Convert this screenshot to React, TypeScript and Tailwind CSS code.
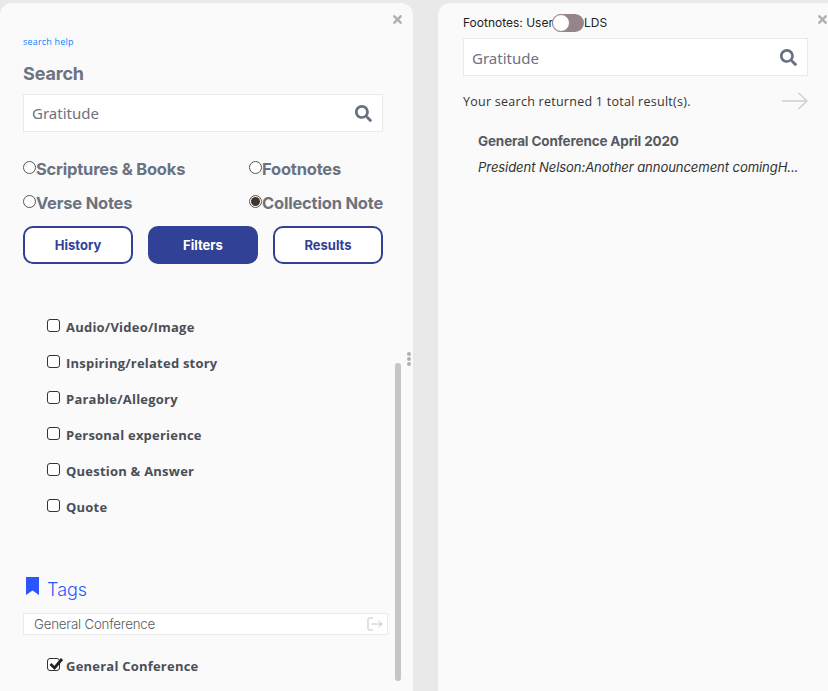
import React from "react";
import { FaSearch, FaTimes } from "react-icons/fa";

const filters = [
  "Audio/Video/Image",
  "Inspiring/related story",
  "Parable/Allegory",
  "Personal experience",
  "Question & Answer",
  "Quote",
];

const Radio = ({ label, checked }: { label: string; checked?: boolean }) => (
  <div className="flex items-center h-6 whitespace-nowrap text-[16.5px] font-bold text-[#6c7280] font-['Inter',sans-serif] tracking-[-0.2px]">
    <span className="w-[13px] h-[13px] mb-[3px] rounded-full border border-[#555] bg-white flex items-center justify-center shrink-0">
      {checked && <span className="w-[9px] h-[9px] rounded-full bg-[#43332f]" />}
    </span>
    <span>{label}</span>
  </div>
);

const SearchBox = ({ textClass }: { textClass: string }) => (
  <div className="h-[38px] bg-white border border-[#eaeaea] flex items-center justify-between pl-2 pr-[10px]">
    <span className={`${textClass} text-[15px] text-[#6c7280] font-['Noto_Sans',sans-serif]`}>Gratitude</span>
    <FaSearch className="text-[#667080] text-[17px]" />
  </div>
);

const Check = ({ label, checked }: { label: string; checked?: boolean }) => (
  <div className="flex items-center h-9 pt-[2px] pl-6 gap-[6px]">
    <span className="relative w-[13px] h-[13px] mb-[6px] rounded-[3px] border border-[#333] bg-white shrink-0">
      {checked && (
        <svg viewBox="0 0 16 16" className="absolute -top-[3px] left-0 w-[16px] h-[16px]">
          <path d="M2.5 8 L6.5 12 L14 3" fill="none" stroke="#222" strokeWidth="2.8" />
        </svg>
      )}
    </span>
    <span className="text-[13px] font-bold text-[#4a4f57] font-['Open_Sans',sans-serif] tracking-[0.22px]">{label}</span>
  </div>
);

const TabButton = ({ label, active }: { label: string; active?: boolean }) => (
  <button
    type="button"
    className={`w-[110px] h-[38px] pt-[2px] rounded-[10px] border-2 border-[#314196] text-[13px] font-bold font-['Inter',sans-serif] ${
      active ? "bg-[#314196] text-white" : "bg-white text-[#314196]"
    }`}
  >
    {label}
  </button>
);

export default function App() {
  return (
    <div className="w-[828px] h-[691px] overflow-hidden bg-[#e9e9e9] pt-[3px] flex relative">
      {/* LEFT PANEL */}
      <div className="relative w-[413px] h-[688px] shrink-0 bg-[#fafafa] rounded-t-[12px] pl-[23px]">
        <FaTimes className="absolute top-[10px] right-[9px] text-[#b0b0b4] text-[13px]" />
        <a className="block mt-[33px] h-3 leading-3 text-[9px] text-[#0a84ff] font-['Open_Sans',sans-serif] tracking-[0.2px]">search help</a>
        <h2 className="mt-[14px] h-6 leading-6 text-[18px] font-bold text-[#6c7280] font-['Inter',sans-serif] tracking-[-0.15px]">Search</h2>
        <div className="w-[360px] mt-[8px]">
          <SearchBox textClass="pt-0" />
          <div className="mt-[25px] flex justify-between">
            <Radio label="Scriptures & Books" />
            <div className="w-[134px]"><Radio label="Footnotes" /></div>
          </div>
          <div className="mt-[10px] flex justify-between">
            <Radio label="Verse Notes" />
            <div className="w-[134px]"><Radio label="Collection Note" checked /></div>
          </div>
          <div className="mt-[11px] flex justify-between">
            <TabButton label="History" />
            <TabButton label="Filters" active />
            <TabButton label="Results" />
          </div>
        </div>

        <div className="mt-[45px]">
          {filters.map((f) => (
            <Check key={f} label={f} />
          ))}
        </div>

        <div className="mt-[50px] h-7 flex items-center pl-[3px] gap-2 text-[#2a55ff]">
          <svg viewBox="0 0 13 18" className="w-[13px] h-[18px] mb-[7px]" fill="#2a55ff">
            <path d="M0 0 H13 V18 L6.5 13.5 L0 18 Z" />
          </svg>
          <span className="text-[18px] font-['Inter',sans-serif] font-light">Tags</span>
        </div>
        <div className="mt-[10px] w-[365px] h-[22px] bg-white border border-[#eaeaea] flex items-center justify-between pl-[10px] pr-[4px]">
          <span className="pt-[2px] text-[13.3px] font-light text-[#555b63] font-['Inter',sans-serif] tracking-[-0.2px]">General Conference</span>
          <svg viewBox="0 0 16 14" className="w-4 h-[14px]" fill="none" stroke="#c4c4c4" strokeWidth="1">
            <path d="M6 1 H2 Q1 1 1 2 V12 Q1 13 2 13 H6" />
            <path d="M4.5 7 H15 M11.5 3.8 L15 7 L11.5 10.2" />
          </svg>
        </div>
        <div className="mt-[13px]">
          <Check label="General Conference" checked />
        </div>

        {/* scrollbar + drag handle */}
        <div className="absolute left-[395px] top-[360px] w-[6px] h-[318px] rounded-full bg-[#c6c6c6]" />
        <div className="absolute left-[407px] top-[349px] flex flex-col gap-[1.5px]">
          <span className="w-[3.5px] h-[3.5px] rounded-full bg-[#b0b0b0]" />
          <span className="w-[3.5px] h-[3.5px] rounded-full bg-[#b0b0b0]" />
          <span className="w-[3.5px] h-[3.5px] rounded-full bg-[#b0b0b0]" />
        </div>
      </div>

      {/* RIGHT PANEL */}
      <div className="relative ml-[25px] flex-1 h-[688px] bg-[#fafafa] rounded-tl-[12px] pl-[25px]">
        <FaTimes className="absolute top-[10px] -right-[1px] text-[#b0b0b4] text-[13px]" />
        <div className="h-[20px] mt-[10px] flex items-center text-[12px] text-[#222] font-['Inter',sans-serif]">
          <span>Footnotes: User</span>
          <span className="w-8 h-[18px] rounded-full bg-[#94848c] flex items-center -ml-px">
            <span className="w-[18px] h-[18px] rounded-full bg-white border border-[#94848c]" />
          </span>
          <span>LDS</span>
        </div>
        <div className="w-[345px] mt-[5px]">
          <SearchBox textClass="pt-[2px]" />
        </div>
        <div className="w-[345px] mt-[13px] h-6 flex items-center justify-between">
          <span className="pt-[3px] text-[12.5px] text-[#333] font-['Open_Sans',sans-serif] tracking-[0.26px]">Your search returned 1 total result(s).</span>
          <svg viewBox="0 0 26 18" className="w-[26px] h-[18px]" fill="none" stroke="#cfcfcf" strokeWidth="1.5">
            <path d="M0 9 H25 M16.5 1 L25 9 L16.5 17" />
          </svg>
        </div>
        <div className="pl-[15px] mt-[18px] w-[345px]">
          <p className="h-5 leading-5 text-[13.5px] font-bold text-[#555a62] font-['Inter',sans-serif] tracking-[-0.15px]">General Conference April 2020</p>
          <p className="mt-[6px] h-5 leading-5 text-[13.1px] italic text-[#333] font-['Inter',sans-serif] tracking-[-0.1px] whitespace-nowrap">President Nelson:Another announcement comingH...</p>
        </div>
      </div>
    </div>
  );
}
